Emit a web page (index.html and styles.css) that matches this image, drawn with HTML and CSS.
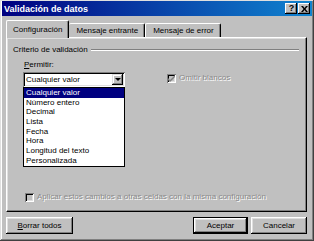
FILE: index.html
```html
<!DOCTYPE html>
<html lang="es">
<head>
  <meta charset="UTF-8" />
  <link rel="stylesheet" href="styles.css">
</head>
<body>

  <div class="window">
    <!-- Title bar -->
    <div class="titlebar">
      <span class="title">Validación de datos</span>
      <div class="caption-btns">
        <span class="cap-btn help">?</span>
        <span class="cap-btn">
          <svg width="7" height="6" viewBox="0 0 7 6"><path d="M0 0h2l1.5 2 1.5-2h2l-2.5 3 2.5 3h-2l-1.5-2-1.5 2h-2l2.5-3z" fill="#000"/></svg>
        </span>
      </div>
    </div>

    <div class="dialog">
      <!-- Tabs -->
      <div class="tabs">
        <div class="tab active">Configuración</div>
        <div class="tab">Mensaje entrante</div>
        <div class="tab">Mensaje de error</div>
      </div>

      <div class="panel">
        <div class="group-title">
          <span>Criterio de validación</span>
          <span class="rule"></span>
        </div>

        <div class="criteria">
          <div class="allow">
            <div class="label"><u>P</u>ermitir:</div>
            <div class="combo">
              <span class="combo-value">Cualquier valor</span>
              <span class="combo-arrow"><span class="tri"></span></span>
              <ul class="dropdown">
                <li class="selected">Cualquier valor</li>
                <li>Número entero</li>
                <li>Decimal</li>
                <li>Lista</li>
                <li>Fecha</li>
                <li>Hora</li>
                <li>Longitud del texto</li>
                <li>Personalizada</li>
              </ul>
            </div>
          </div>

          <div class="check disabled omit">
            <span class="box">
              <svg width="7" height="7" viewBox="0 0 7 7"><path d="M0 3l2 2 5-5v2l-5 5-2-2z" fill="#808080"/></svg>
            </span>
            <span>Omitir blancos</span>
          </div>
        </div>

        <div class="check disabled apply">
          <span class="box"></span>
          <span>Aplicar estos cambios a otras celdas con la misma configuración</span>
        </div>
      </div>

      <!-- Buttons -->
      <div class="buttons">
        <button class="btn wide"><u>B</u>orrar todos</button>
        <span class="spacer"></span>
        <button class="btn default">Aceptar</button>
        <button class="btn">Cancelar</button>
      </div>
    </div>
  </div>

</body>
</html>
```
FILE: styles.css
```css
* {
  margin: 0;
  padding: 0;
  box-sizing: border-box;
}

html, body {
  width: 314px;
  height: 241px;
  overflow: hidden;
  font-family: "Liberation Sans", Arial, sans-serif;
  font-size: 8px;
  color: #000;
}

.window {
  width: 314px;
  height: 241px;
  background: #c0c0c0;
  padding: 1px 2px 2px 2px;
  display: flex;
  flex-direction: column;
  box-shadow: inset -1px -1px #404040, inset 1px 1px #dfdfdf, inset -2px -2px #808080, inset 2px 2px #fff;
}

/* Title bar */
.titlebar {
  height: 15px;
  background: linear-gradient(to right, #000080, #1084d0);
  display: flex;
  align-items: center;
  padding: 0 2px 0 2px;
}

.title {
  color: #fff;
  font-weight: bold;
  font-size: 9px;
  flex: 1;
}

.caption-btns {
  display: flex;
  gap: 1px;
}

.cap-btn {
  width: 12px;
  height: 11px;
  background: #c0c0c0;
  display: flex;
  align-items: center;
  justify-content: center;
  box-shadow: inset -1px -1px #000, inset 1px 1px #fff, inset -2px -2px #808080;
}

.cap-btn.help {
  font-weight: bold;
  font-size: 9px;
  line-height: 11px;
  padding-left: 1px;
}

/* Dialog body */
.dialog {
  flex: 1;
  display: flex;
  flex-direction: column;
  padding: 4px 5px 0 4px;
}

.tabs {
  display: flex;
  align-items: flex-end;
  height: 17px;
}

.tab {
  height: 14px;
  padding: 2px 6px 0 7px;
  white-space: nowrap;
  border-radius: 2px 2px 0 0;
  border-top: 1px solid #fff;
  border-left: 1px solid #fff;
  border-right: 1px solid #000;
  box-shadow: inset -1px 0 #808080;
}

.tab.active {
  height: 18px;
  margin-bottom: -1px;
  padding: 4px 6px 0 6px;
  position: relative;
  z-index: 1;
  background: #c0c0c0;
}

.tab.active + .tab {
  border-left: none;
}

.panel {
  height: 175px;
  display: flex;
  flex-direction: column;
  border-top: 1px solid #fff;
  border-left: 1px solid #fff;
  border-right: 1px solid #000;
  border-bottom: 1px solid #000;
  box-shadow: inset -1px -1px #808080, inset 1px 1px #dfdfdf;
  padding: 0 2px 9px 2px;
}

.group-title {
  display: flex;
  align-items: center;
  margin-top: 7px;
  padding-left: 4px;
  padding-right: 5px;
  line-height: 10px;
  gap: 3px;
}

.rule {
  flex: 1;
  height: 2px;
  border-top: 1px solid #808080;
  border-bottom: 1px solid #fff;
}

.criteria {
  display: flex;
  align-items: flex-start;
  margin-top: 5px;
  padding-left: 14px;
  gap: 42px;
}

.allow {
  width: 102px;
}

.label {
  line-height: 10px;
  padding-left: 1px;
}

.combo {
  position: relative;
  margin-top: 2px;
  height: 15px;
  background: #fff;
  display: flex;
  align-items: center;
  padding: 2px;
  box-shadow: inset 1px 1px #808080, inset -1px -1px #fff, inset 2px 2px #000, inset -2px -2px #dfdfdf;
}

.combo-value {
  flex: 1;
  padding-left: 1px;
  line-height: 11px;
}

.combo-arrow {
  width: 11px;
  height: 11px;
  background: #c0c0c0;
  display: flex;
  align-items: center;
  justify-content: center;
  box-shadow: inset -1px -1px #000, inset 1px 1px #dfdfdf, inset -2px -2px #808080, inset 2px 2px #fff;
}

.tri {
  width: 0;
  height: 0;
  border-left: 3px solid transparent;
  border-right: 3px solid transparent;
  border-top: 3px solid #000;
}

.dropdown {
  position: absolute;
  top: 15px;
  left: 0;
  width: 102px;
  list-style: none;
  background: #fff;
  border: 1px solid #000;
  z-index: 2;
}

.dropdown li {
  height: 9.7px;
  line-height: 9.7px;
  padding-left: 2px;
  white-space: nowrap;
}

.dropdown li.selected {
  background: #000080;
  color: #fff;
}

/* Checkboxes */
.check {
  display: flex;
  align-items: center;
  gap: 3px;
  line-height: 10px;
}

.check.disabled {
  color: #8a8a8a;
  text-shadow: 1px 1px #fff;
}

.box {
  width: 9px;
  height: 9px;
  background: #c0c0c0;
  display: flex;
  align-items: center;
  justify-content: center;
  box-shadow: inset 1px 1px #808080, inset -1px -1px #fff, inset 2px 2px #000, inset -2px -2px #dfdfdf;
}

.omit {
  margin-top: 13px;
}

.apply {
  margin-top: auto;
  padding-left: 16px;
}

/* Buttons */
.buttons {
  display: flex;
  margin-top: 5px;
  gap: 3px;
}

.spacer {
  flex: 1;
}

.btn {
  font-family: inherit;
  font-size: 8px;
  height: 17px;
  width: 56px;
  border: none;
  background: #c0c0c0;
  color: #000;
  box-shadow: inset -1px -1px #000, inset 1px 1px #fff, inset -2px -2px #808080, inset 2px 2px #dfdfdf;
}

.btn.wide {
  width: 67px;
}

.btn.default {
  border: 1px solid #000;
  width: 55px;
}
```
